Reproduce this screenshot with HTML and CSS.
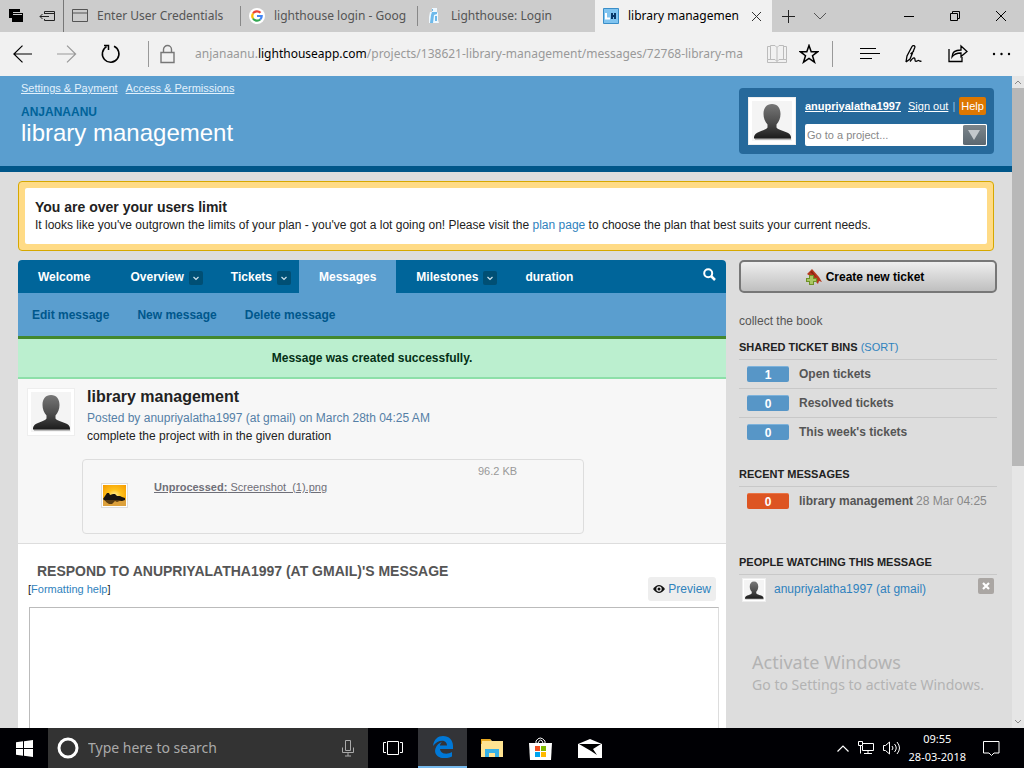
FILE: index.html
```html
<!DOCTYPE html>
<html lang="en">
<head>
<meta charset="utf-8">
<title>library management</title>
<link rel="stylesheet" href="styles.css">
</head>
<body>
<svg class="defs" aria-hidden="true">
  <defs>
    <linearGradient id="suit" x1="0" y1="0" x2="0" y2="1"><stop offset="0" stop-color="#777"/><stop offset=".5" stop-color="#505050"/><stop offset="1" stop-color="#1c1c1c"/></linearGradient>
    <radialGradient id="sun" cx=".5" cy=".5" r=".7"><stop offset="0" stop-color="#fff3a0"/><stop offset=".4" stop-color="#ffc21c"/><stop offset="1" stop-color="#f59a00"/></radialGradient>
    <symbol id="person" viewBox="0 0 40 40"><rect width="40" height="40" fill="#f4f4f4"/><path d="M3 38h36" stroke="#bbb" stroke-width="2"/><path d="M20 3c5.500 0 8.500 4 8.500 10 0 4-1.500 8-4 10.500v3c1.500 3 10 3.500 13 6.500 1.500 1.500 1.500 3 1.500 4.500H2c0-1.500 0-3 1.500-4.500 3-3 10.500-3.500 12-6.500v-3c-2.500-2.500-4-6.500-4-10.500C11.500 7 14.500 3 20 3z" fill="url(#suit)"/></symbol>
    <symbol id="chev" viewBox="0 0 14 14"><path d="M4.500 6L7 8.500 9.500 6" fill="none" stroke="#cfe3ee" stroke-width="1.200"/></symbol>
  </defs>
</svg>

<nav class="tabs" aria-label="Browser tabs">
  <div class="tab-tools">
    <button class="plain" aria-label="Tabs set aside"><svg width="16" height="16" viewBox="0 0 16 16"><path d="M1 1h11v3h-7v6H1z"/><path d="M4 5h11v9H4z"/><path d="M5 6.500h9" stroke="#ccc"/></svg></button>
    <button class="plain" aria-label="Set tabs aside"><svg width="17" height="16" viewBox="0 0 17 16" fill="none" stroke="#222"><path d="M5.500 5V3.500h10v9h-10V11M5 5.500h10M1 8.500h9M3.500 6L1 8.500 3.500 11"/></svg></button>
  </div>
  <a class="tab" href="#t1"><svg width="16" height="16" viewBox="0 0 16 16" fill="none" stroke="#555"><path d="M.5 1.500h15v12H.5zM.5 5h15"/></svg><span>Enter User Credentials</span></a>
  <a class="tab" href="#t2"><svg width="16" height="16" viewBox="0 0 16 16" fill="none" stroke-width="2.200"><circle cx="8" cy="8" r="8" fill="#fff"/><path d="M11.500 4.800A4.800 4.800 0 0 0 4 5.500" stroke="#ea4335"/><path d="M4 5.500a4.800 4.800 0 0 0 0 5" stroke="#fbbc05"/><path d="M4 10.500a4.800 4.800 0 0 0 7.200 1" stroke="#34a853"/><path d="M8 8h4.700a4.800 4.800 0 0 1-1.500 3.500" stroke="#4285f4"/></svg><span>lighthouse login - Goog</span></a>
  <a class="tab" href="#t3"><svg width="16" height="16" viewBox="0 0 16 16"><path d="M6 0h5v4l1 1v7l1 3H3V9l1-5h2z" fill="#eef8ff"/><path d="M6 4h5v2l-3 1-1 8H4l1-8zM6 1h1v2H6zM9 8h2v5H9z" fill="#6db9ea"/></svg><span>Lighthouse: Login</span></a>
  <a class="tab active" href="#t4"><svg width="16" height="16" viewBox="0 0 16 16"><path d="M.5.5h15v15H.5z" fill="#80c4f0" stroke="#3a8ec8"/><path d="M3 5v5.500h4" fill="none" stroke="#fff" stroke-width="2"/><path d="M9 5v6M12 5v6M9 8h3" stroke="#0a3767" stroke-width="2"/></svg><span>library managemen</span><svg width="11" height="11" viewBox="0 0 11 11"><path d="M1 1l9 9M10 1l-9 9" stroke="#333"/></svg></a>
  <button class="plain new-tab" aria-label="New tab"><svg width="13" height="13" viewBox="0 0 13 13"><path d="M6.500 0v13M0 6.500h13" stroke="#222"/></svg></button>
  <button class="plain" aria-label="Tab list"><svg width="14" height="8" viewBox="0 0 14 8" fill="none"><path d="M1 1l6 6 6-6" stroke="#555"/></svg></button>
  <div class="window-tools">
    <button class="plain" aria-label="Minimize"><svg width="10" height="10" viewBox="0 0 10 10"><path d="M0 5.500h10" stroke="#000"/></svg></button>
    <button class="plain" aria-label="Restore"><svg width="10" height="10" viewBox="0 0 10 10" fill="none" stroke="#000"><path d="M.5 2.500h7v7h-7zM2.500 2.500v-2h7v7h-2"/></svg></button>
    <button class="plain" aria-label="Close"><svg width="10" height="10" viewBox="0 0 10 10"><path d="M0 0l10 10M10 0L0 10" stroke="#000"/></svg></button>
  </div>
</nav>

<div class="address-bar">
  <div class="nav-tools">
    <button class="plain" aria-label="Back"><svg width="20" height="18" viewBox="0 0 20 18" fill="none" stroke="#000" stroke-width="1.200"><path d="M.8 9H19M9.500.6L.9 9l8.600 8.400"/></svg></button>
    <button class="plain" aria-label="Forward"><svg width="20" height="18" viewBox="0 0 20 18" fill="none" stroke="#999" stroke-width="1.200"><path d="M0 9h18.500M10 .6L18.600 9 10 17.400"/></svg></button>
    <button class="plain" aria-label="Refresh"><svg width="20" height="20" viewBox="0 0 20 20" fill="none" stroke="#000" stroke-width="1.500"><path d="M13 2.300a8.300 8.300 0 1 1-7.500.4M3 1.500h4.500V6"/></svg></button>
  </div>
  <svg class="lock" width="16" height="20" viewBox="0 0 16 20" fill="none" stroke="#777" stroke-width="1.400"><path d="M1 8.500h13v10H1zM3.500 8V5.500a4 4 0 0 1 8 0V8"/></svg>
  <div class="url">anjanaanu.<b>lighthouseapp.com</b>/projects/138621-library-management/messages/72768-library-ma</div>
  <div class="page-tools">
    <button class="plain" aria-label="Reading view"><svg width="20" height="20" viewBox="0 0 20 20" fill="none" stroke="#bbb"><path d="M.5 2.500h3v13h-3zM19.500 2.500h-3v13h3zM3.500 1.500H8l2 2 2-2h4.500v14H12l-2 2-2-2H3.500zM10 3.500v14M.5 15.500v3h19v-3"/></svg></button>
    <button class="plain" aria-label="Favourites"><svg width="20" height="20" viewBox="0 0 20 20" fill="none" stroke="#000" stroke-width="1.500"><path d="M10 1.500l2.200 6.200h6.500l-5.200 4 2 6.500L10 14.300l-5.500 3.900 2-6.500-5.200-4h6.500z"/></svg></button>
  </div>
  <div class="hub-tools">
    <button class="plain" aria-label="Hub"><svg width="20" height="14" viewBox="0 0 20 14"><path d="M0 1.500h16M0 6.500h20M0 11.500h12" stroke="#000"/></svg></button>
    <button class="plain" aria-label="Web note"><svg width="20" height="20" viewBox="0 0 20 20" fill="none" stroke="#000" stroke-width="1.300"><path d="M2 18L3 12 8 2.500c1-1.700 3.500-.8 2.800 1L6 15l-4 3M10 7L6.500 10M6 17.500c4-5 5-4 5-1.500 0 2 1.500 1.500 3 .5 1-.7 1.500 1.500 3.500.5"/></svg></button>
    <button class="plain" aria-label="Share"><svg width="20" height="20" viewBox="0 0 20 20" fill="none" stroke="#000" stroke-width="1.300"><path d="M1 5v12.500h13V13M4 13c0-5 3-7 9-7V2l6 5.500-6 5V9c-4 0-7 1-9 4z"/></svg></button>
    <button class="plain" aria-label="More"><svg width="19" height="4" viewBox="0 0 19 4"><circle cx="2" cy="2" r="1.200"/><circle cx="9.500" cy="2" r="1.200"/><circle cx="17" cy="2" r="1.200"/></svg></button>
  </div>
</div>

<div class="viewport">
  <div class="page">
    <header class="site-header">
      <div class="titles">
        <div class="top-links"><a href="#settings">Settings &amp; Payment</a><a href="#access">Access &amp; Permissions</a></div>
        <div class="account">ANJANAANU</div>
        <h1>library management</h1>
      </div>
      <div class="user-box">
        <svg class="avatar" viewBox="0 0 40 40"><use href="#person"/></svg>
        <div class="user-info">
          <div class="user-links"><a href="#me"><b>anupriyalatha1997</b></a><a href="#out">Sign out</a><i>|</i><a class="help" href="#help">Help</a></div>
          <div class="picker"><input type="text" aria-label="Go to a project" placeholder="Go to a project..."><button aria-label="Show projects"><svg width="12" height="10" viewBox="0 0 12 10"><path d="M0 0h12L6 10z" fill="#c3c8cc"/></svg></button></div>
        </div>
      </div>
    </header>

    <section class="limit">
      <div class="limit-body">
        <h2>You are over your users limit</h2>
        <p>It looks like you've outgrown the limits of your plan - you've got a lot going on! Please visit the <a href="#plan">plan page</a> to choose the plan that best suits your current needs.</p>
      </div>
    </section>

    <div class="columns">
      <main>
        <nav class="menu">
          <a href="#w">Welcome</a>
          <a class="drop" href="#o">Overview<svg><use href="#chev"/></svg></a>
          <a class="drop" href="#t">Tickets<svg><use href="#chev"/></svg></a>
          <a class="current" href="#m">Messages</a>
          <a class="drop" href="#s">Milestones<svg><use href="#chev"/></svg></a>
          <a href="#d">duration</a>
          <button class="plain search" aria-label="Search"><svg width="13" height="13" viewBox="0 0 13 13" fill="none" stroke="#fff"><circle cx="5.200" cy="5.200" r="4" stroke-width="2"/><path d="M8 8l4 4" stroke-width="2.500"/></svg></button>
        </nav>
        <nav class="submenu"><a href="#e">Edit message</a><a href="#n">New message</a><a href="#x">Delete message</a></nav>
        <p class="flash">Message was created successfully.</p>
        <article class="message">
          <svg class="avatar" viewBox="0 0 40 40"><use href="#person"/></svg>
          <div class="message-body">
            <h2>library management</h2>
            <p class="byline">Posted by anupriyalatha1997 (at gmail) on March 28th 04:25 AM</p>
            <p>complete the project with in the given duration</p>
          </div>
          <div class="attachment">
            <svg class="thumb" viewBox="0 0 23 21"><path d="M0 0h23v21H0z" fill="url(#sun)"/><path d="M0 14h23v7H0z" fill="#dda13c"/><path d="M0 14l2-3 2-3 2 0 1 2 3-1 2 0 2 2 3 0 2 1 3 1v2l-3 1H3l-2-1z" fill="#181410"/><path d="M2 15h17l-5 2-2-1-3 3-3 0-3-2z" fill="#5a3d12"/></svg>
            <a href="#file"><b>Unprocessed:</b> Screenshot_(1).png</a>
            <span class="size">96.2 KB</span>
          </div>
        </article>
        <form class="reply">
          <h3>RESPOND TO ANUPRIYALATHA1997 (AT GMAIL)'S MESSAGE</h3>
          <div class="reply-tools">
            <span class="format">[<a href="#format">Formatting help</a>]</span>
            <button class="preview" type="button"><svg width="12" height="10" viewBox="0 0 12 10"><path d="M0 5q6-8 12 0q-6 8-12 0z" fill="#111"/><circle cx="6" cy="5" r="2.700" fill="#eee"/><circle cx="6" cy="5" r="1.500" fill="#111"/></svg>Preview</button>
          </div>
          <textarea aria-label="Response"></textarea>
        </form>
      </main>

      <aside>
        <button class="create"><svg width="16" height="16" viewBox="0 0 16 16"><path d="M1 5l5-5 7 8 3 5-3-1-1 3-8-8z" fill="#b5391e"/><path d="M4 3l2-1 5 7z" fill="#8a2312"/><path d="M3 6h5v3h3v4H8v3H3v-3H0V9h3z" fill="#6f9228"/><path d="M4 7h3v3h3v2H7v3H4v-3H1v-2h3z" fill="#a9c763"/></svg>Create new ticket</button>
        <p class="summary">collect the book</p>
        <section class="bins">
          <h3>SHARED TICKET BINS <a href="#sort">(SORT)</a></h3>
          <ul>
            <li><span class="count">1</span><a href="#open">Open tickets</a></li>
            <li><span class="count">0</span><a href="#resolved">Resolved tickets</a></li>
            <li><span class="count">0</span><a href="#week">This week's tickets</a></li>
          </ul>
        </section>
        <section class="recent">
          <h3>RECENT MESSAGES</h3>
          <ul><li><span class="count hot">0</span><a href="#lm">library management</a><time>28 Mar 04:25</time></li></ul>
        </section>
        <section class="watchers">
          <h3>PEOPLE WATCHING THIS MESSAGE</h3>
          <div class="watcher"><svg class="avatar small" viewBox="0 0 40 40"><use href="#person"/></svg><a href="#aw">anupriyalatha1997 (at gmail)</a><button aria-label="Remove watcher"><svg width="8" height="8" viewBox="0 0 8 8"><path d="M1 1l6 6M7 1L1 7" stroke="#fff" stroke-width="2.200"/></svg></button></div>
        </section>
      </aside>
    </div>
    <div class="activate"><strong>Activate Windows</strong><span>Go to Settings to activate Windows.</span></div>
  </div>
  <div class="scrollbar">
    <svg width="12" height="12" viewBox="0 0 12 12"><path d="M3 8l3-3 3 3" fill="none" stroke="#888"/></svg>
    <div class="thumb-track"></div>
    <div class="rest-track"></div>
    <svg width="12" height="12" viewBox="0 0 12 12"><path d="M3 4l3 3 3-3" fill="none" stroke="#888"/></svg>
  </div>
</div>

<footer class="taskbar">
  <button class="plain start" aria-label="Start"><svg width="17" height="17" viewBox="0 0 17 17" fill="#fff"><path d="M0 2.300l7-1V8H0zM8 1.200L17 0v8H8zM0 9h7v6.700l-7-1zM8 9h9v8l-9-1.200z"/></svg></button>
  <label class="search-box">
    <svg width="22" height="22" viewBox="0 0 22 22"><circle cx="11" cy="11" r="9" fill="none" stroke="#fff" stroke-width="3"/></svg>
    <input type="text" aria-label="Search" placeholder="Type here to search">
    <svg width="12" height="17" viewBox="0 0 12 17" fill="none" stroke="#aaa"><path d="M3.500.5h5v10h-5zM.5 7.500v5h11v-5M6 12.500v3.500M3 16h6"/></svg>
  </label>
  <button class="plain app" aria-label="Task view"><svg width="20" height="16" viewBox="0 0 20 16" fill="none" stroke="#fff"><path d="M4.500 1.500h11v13h-11zM3 2.500H.5v10H3M17 2.500h2.500v10H17"/></svg></button>
  <button class="plain app running" aria-label="Edge"><svg width="22" height="22" viewBox="0 0 22 22"><path d="M1 10C2 3 6 0 11 0c6 0 10 4 10 10v3H8c.5 5 7 6 12 3v4.500C10 25 1 20 3.500 12.500 4.500 9 7 7 10 6 8.500 7.500 8 8.500 8 9.500h7C15 3 6 3 1 10z" fill="#0078d7"/></svg></button>
  <button class="plain app" aria-label="File Explorer"><svg width="22" height="19" viewBox="0 0 22 19"><path d="M0 0h9l2 2h11v16H0z" fill="#ffe391"/><path d="M0 0h9l1 2H1v3H0z" fill="#e8a820"/><path d="M4 18v-8h14v8h-4v-4H8v4z" fill="#37b1e6"/></svg></button>
  <button class="plain app" aria-label="Store"><svg width="23" height="23" viewBox="0 0 23 23"><path d="M7 7V4q4-6 9 0v3M9 6q3-6 5 0" fill="none" stroke="#fff"/><path d="M0 6h23l-1 17H1z" fill="#fff"/><path d="M6 9h5v5H6z" fill="#f25022"/><path d="M12 9h5v5h-5z" fill="#7fba00"/><path d="M6 15h5v5H6z" fill="#00a4ef"/><path d="M12 15h5v5h-5z" fill="#ffb900"/></svg></button>
  <button class="plain app" aria-label="Mail"><svg width="24" height="19" viewBox="0 0 24 19"><path d="M0 5l12-5 12 5v14H0z" fill="#fff"/><path d="M1 5h22l-8 5 4 6-6-4z" fill="#000"/></svg></button>
  <div class="tray">
    <svg width="12" height="7" viewBox="0 0 12 7"><path d="M.5 6.500L6 1l5.500 5.500" fill="none" stroke="#fff" stroke-width="1.200"/></svg>
    <svg width="16" height="14" viewBox="0 0 16 14" fill="none" stroke="#fff"><path d="M5 2.500h10.500v7h-11V5M10 9.500v3M6 12.500h8M.5.5h4v4h-4zM2.500 4.500v8"/></svg>
    <svg width="17" height="14" viewBox="0 0 17 14" fill="none" stroke="#fff"><path d="M.5 4.500h2l4-3.500v12l-4-3.500h-2zM9 5q2 2 0 4M11.500 3q3.500 4 0 8M14 1q5 6 0 12"/></svg>
    <div class="clock"><span>09:55</span><span>28-03-2018</span></div>
    <svg width="17" height="17" viewBox="0 0 17 17" fill="none" stroke="#fff"><path d="M.5 1.500h15.500v11.500h-5l-2.500 2.500L6 13H.5z"/></svg>
  </div>
</footer>
</body>
</html>
```
FILE: styles.css
```css
* { box-sizing: border-box; }
body {
  margin: 0;
  height: 100vh;
  display: flex;
  flex-direction: column;
  overflow: hidden;
  font: 12px/18px "Liberation Sans", Arial, sans-serif;
  color: #222;
}
h1, h2, h3, p, ul { margin: 0; padding: 0; }
ul { list-style: none; }
svg { display: block; flex: none; }
a { color: #2f82bd; text-decoration: none; }
button, input, textarea { font: inherit; }
.defs { position: absolute; width: 0; height: 0; }
.plain { padding: 0; border: 0; background: none; display: flex; align-items: center; justify-content: center; }

/* browser chrome */
.tabs, .address-bar, .taskbar, .activate { font-family: "Noto Sans", "Open Sans", sans-serif; }
.tabs { flex: none; height: 32px; display: flex; align-items: center; background: #ccc; font-size: 12px; }
.tab-tools { width: 64px; height: 32px; display: flex; align-items: center; justify-content: space-between; padding: 0 7px 0 8px; border-right: 1px solid #777; }
.tab { width: 177px; height: 20px; padding: 0 8px; display: flex; align-items: center; gap: 9px; color: #555; border-right: 1px solid #888; }
.tab span { flex: 1; min-width: 0; white-space: nowrap; }
.tab:nth-of-type(3) { border-right: 0; }
.tab.active { height: 32px; padding-right: 10px; background: #f1f1f1; color: #000; border-right: 0; }
.new-tab { margin: 0 18px 0 10px; }
.window-tools { margin-left: auto; padding-right: 18px; display: flex; gap: 36px; }
.address-bar { flex: none; height: 44px; display: flex; align-items: center; background: #f1f1f1; font-size: 12px; }
.nav-tools { width: 149px; height: 26px; padding-left: 13px; display: flex; gap: 24px; border-right: 1px solid #999; }
.lock { margin: 0 19px 0 11px; }
.url { flex: 1; min-width: 0; white-space: nowrap; color: #999; }
.url b { font-weight: 400; color: #000; }
.page-tools { height: 26px; margin-left: 17px; padding-right: 13px; display: flex; gap: 12px; border-right: 1px solid #999; }
.hub-tools { padding: 0 13px 0 27px; display: flex; align-items: center; gap: 24px; }

/* page */
.viewport { flex: 1; min-height: 0; display: flex; background: #ddd; }
.page { flex: 1; min-width: 0; position: relative; overflow: hidden; }
.site-header { min-height: 96px; padding: 3px 18px 0 21px; display: flex; justify-content: space-between; align-items: flex-start; background: #5a9ecf; border-bottom: 6px solid #005689; }
.top-links { display: flex; gap: 8px; font-size: 11px; }
.top-links a { color: #e2f1fc; text-decoration: underline; }
.account { margin-top: 6px; color: #00639a; line-height: 18px; font-weight: 700; }
.site-header h1 { font-size: 24px; line-height: 24px; font-weight: 400; color: #fff; }
.user-box { width: 255px; margin-top: 9px; padding: 9px 7px 8px 9px; display: flex; gap: 9px; background: #26699b; border-radius: 4px; }
.avatar { width: 48px; height: 48px; padding: 3px; background: #fff; border: 1px solid #eee; }
.user-info { flex: 1; }
.user-links { display: flex; align-items: center; gap: 4px; font-size: 11px; }
.user-links a { color: #fff; text-decoration: underline; }
.user-links a:first-child { margin-right: 3px; }
.user-links i { font-style: normal; color: #8fc1e4; }
.user-links .help { padding: 0 2px; background: #dd7700; border-radius: 2px; text-decoration: none; }
.picker { height: 22px; margin-top: 9px; display: flex; background: #fff; border-radius: 2px; }
.picker input { flex: 1; min-width: 0; padding: 0 2px; border: 0; background: none; font-size: 11px; }
.picker input::placeholder { color: #888; }
.picker button { width: 24px; padding: 0 5px; border: 1px solid #fff; border-left: 0; border-radius: 2px; background: linear-gradient(#7c858b, #5c6871); }

.limit { margin: 9px 18px; padding: 6px; background: #ffdb86; border: 1px solid #d6a800; border-radius: 4px; }
.limit-body { min-height: 56px; padding: 10px; background: #fff; border-radius: 2px; }
.limit h2 { font-size: 14px; line-height: 18px; }
.columns { margin: 0 15px 0 18px; display: flex; align-items: flex-start; gap: 13px; }
main { flex: 1; min-width: 0; background: #fff; border-radius: 4px 4px 0 0; overflow: hidden; }
.menu { height: 33px; display: flex; background: #00659a; font-weight: 700; }
.menu a { padding: 0 20px; line-height: 34px; color: #fff; }
.menu .drop { padding-right: 8px; display: flex; gap: 5px; }
.menu .drop svg { width: 14px; height: 14px; margin-top: 11px; background: #004f74; border-radius: 2px; }
.menu .current { background: #5a9ecf; }
.menu .search { height: 28px; margin-left: auto; padding-right: 10px; }
.submenu { height: 46px; padding: 0 14px; display: flex; gap: 28px; background: #5a9ecf; border-bottom: 3px solid #43882e; font-weight: 700; }
.submenu a { color: #00578c; line-height: 44px; }
.flash { padding: 10px; text-align: center; font-weight: 700; color: #043016; background: #bbefcf; border-bottom: 2px solid #8ddfa9; }
.message { min-height: 165px; padding: 9px; display: grid; grid-template-columns: 48px 1fr; column-gap: 12px; align-content: start; background: #f7f7f7; border-bottom: 1px solid #ddd; }
.message h2 { font-size: 16px; line-height: 18px; }
.message .byline { color: #557fa6; line-height: 24px; }
.message-body p:last-child { line-height: 12px; }
.attachment { grid-column: 1 / -1; width: 502px; min-height: 75px; margin: 17px 0 0 55px; padding: 18px; display: flex; border: 1px solid #ddd; border-radius: 4px; font-size: 11px; }
.attachment a { width: 324px; color: #6f6f78; text-decoration: underline; margin-left: 26px; }
.thumb { width: 27px; height: 25px; margin-top: 5px; padding: 1px; border: 1px solid #ddd; background: #fff; }
.size { color: #999; line-height: 16px; margin-top: -15px; }
.reply { padding: 18px 7px 0 11px; }
.reply h3 { padding-left: 8px; font-size: 14px; line-height: 18px; color: #555; }
.reply-tools { padding-right: 3px; display: flex; justify-content: space-between; font-size: 11px; }
.format { margin-left: -1px; }
.preview { height: 24px; margin: -3px 0 6px; padding: 0 5px; display: flex; align-items: center; gap: 3px; border: 0; border-radius: 3px; background: #eee; color: #2f82bd; font-size: 12px; }
.reply textarea { display: block; width: 100%; height: 200px; border: 1px solid #bbb; border-right-color: #ddd; resize: none; }

aside { width: 258px; flex: none; }
.create { width: 100%; height: 33px; padding: 0 6px 0 0; display: flex; align-items: center; justify-content: center; gap: 4px; border: 2px solid #777; border-radius: 5px; background: linear-gradient(#eee, #bfbfbf); color: #000; font-weight: 700; }
.summary { margin: 19px 0 9px; color: #555; }
aside h3 { font-size: 11px; line-height: 16px; padding-bottom: 4px; border-bottom: 1px solid #c8c8c8; }
aside h3 a { font-weight: 400; }
aside li { min-height: 29px; padding: 0 8px; display: flex; align-items: center; gap: 10px; border-bottom: 1px solid #c8c8c8; }
aside li:last-child { border-color: transparent; }
aside li a { color: #555; font-weight: 700; }
aside li time { color: #888; margin-left: -7px; }
.count { width: 42px; height: 16px; line-height: 16px; text-align: center; border-radius: 2px; border-top: 1px solid #7db2db; background: #5796c7; color: #fff; font-weight: 700; }
.hot { background: #dd5522; border-color: #ea7445; }
.recent { margin-top: 19px; }
.watchers { margin-top: 38px; }
.watcher { padding: 3px; display: flex; align-items: flex-start; gap: 8px; }
.watcher a { flex: 1; line-height: 22px; }
.watcher button { width: 16px; height: 16px; padding: 4px; border: 0; border-radius: 2px; background: #aaa6a3; }
.avatar.small { width: 24px; height: 24px; padding: 1px; }
.activate { position: absolute; right: 28px; bottom: 32px; display: flex; flex-direction: column; color: #b3b3b3; font-size: 14px; line-height: 22px; }
.activate strong { font-size: 18px; font-weight: 400; line-height: 24px; }
.scrollbar { width: 12px; display: flex; flex-direction: column; background: #e6e6e6; }
.thumb-track { flex: 378; background: #b8b8b8; }
.rest-track { flex: 250; }

.taskbar { flex: none; height: 40px; display: flex; background: #000004; color: #fff; }
.start { width: 48px; }
.search-box { width: 320px; padding: 0 14px 0 9px; display: flex; align-items: center; gap: 9px; background: #333; }
.search-box input { flex: 1; min-width: 0; padding: 0; border: 0; background: none; color: #fff; font-size: 14px; }
.search-box input::placeholder { color: #aaa; }
.app { width: 49px; }
.running { margin-left: 1px; background: #333438; border-bottom: 2px solid #76b9ed; }
.tray { margin-left: auto; padding-right: 24px; display: flex; align-items: center; gap: 9px; }
.clock { margin-right: 8px; text-align: center; display: flex; flex-direction: column; font-size: 11px; }
```
